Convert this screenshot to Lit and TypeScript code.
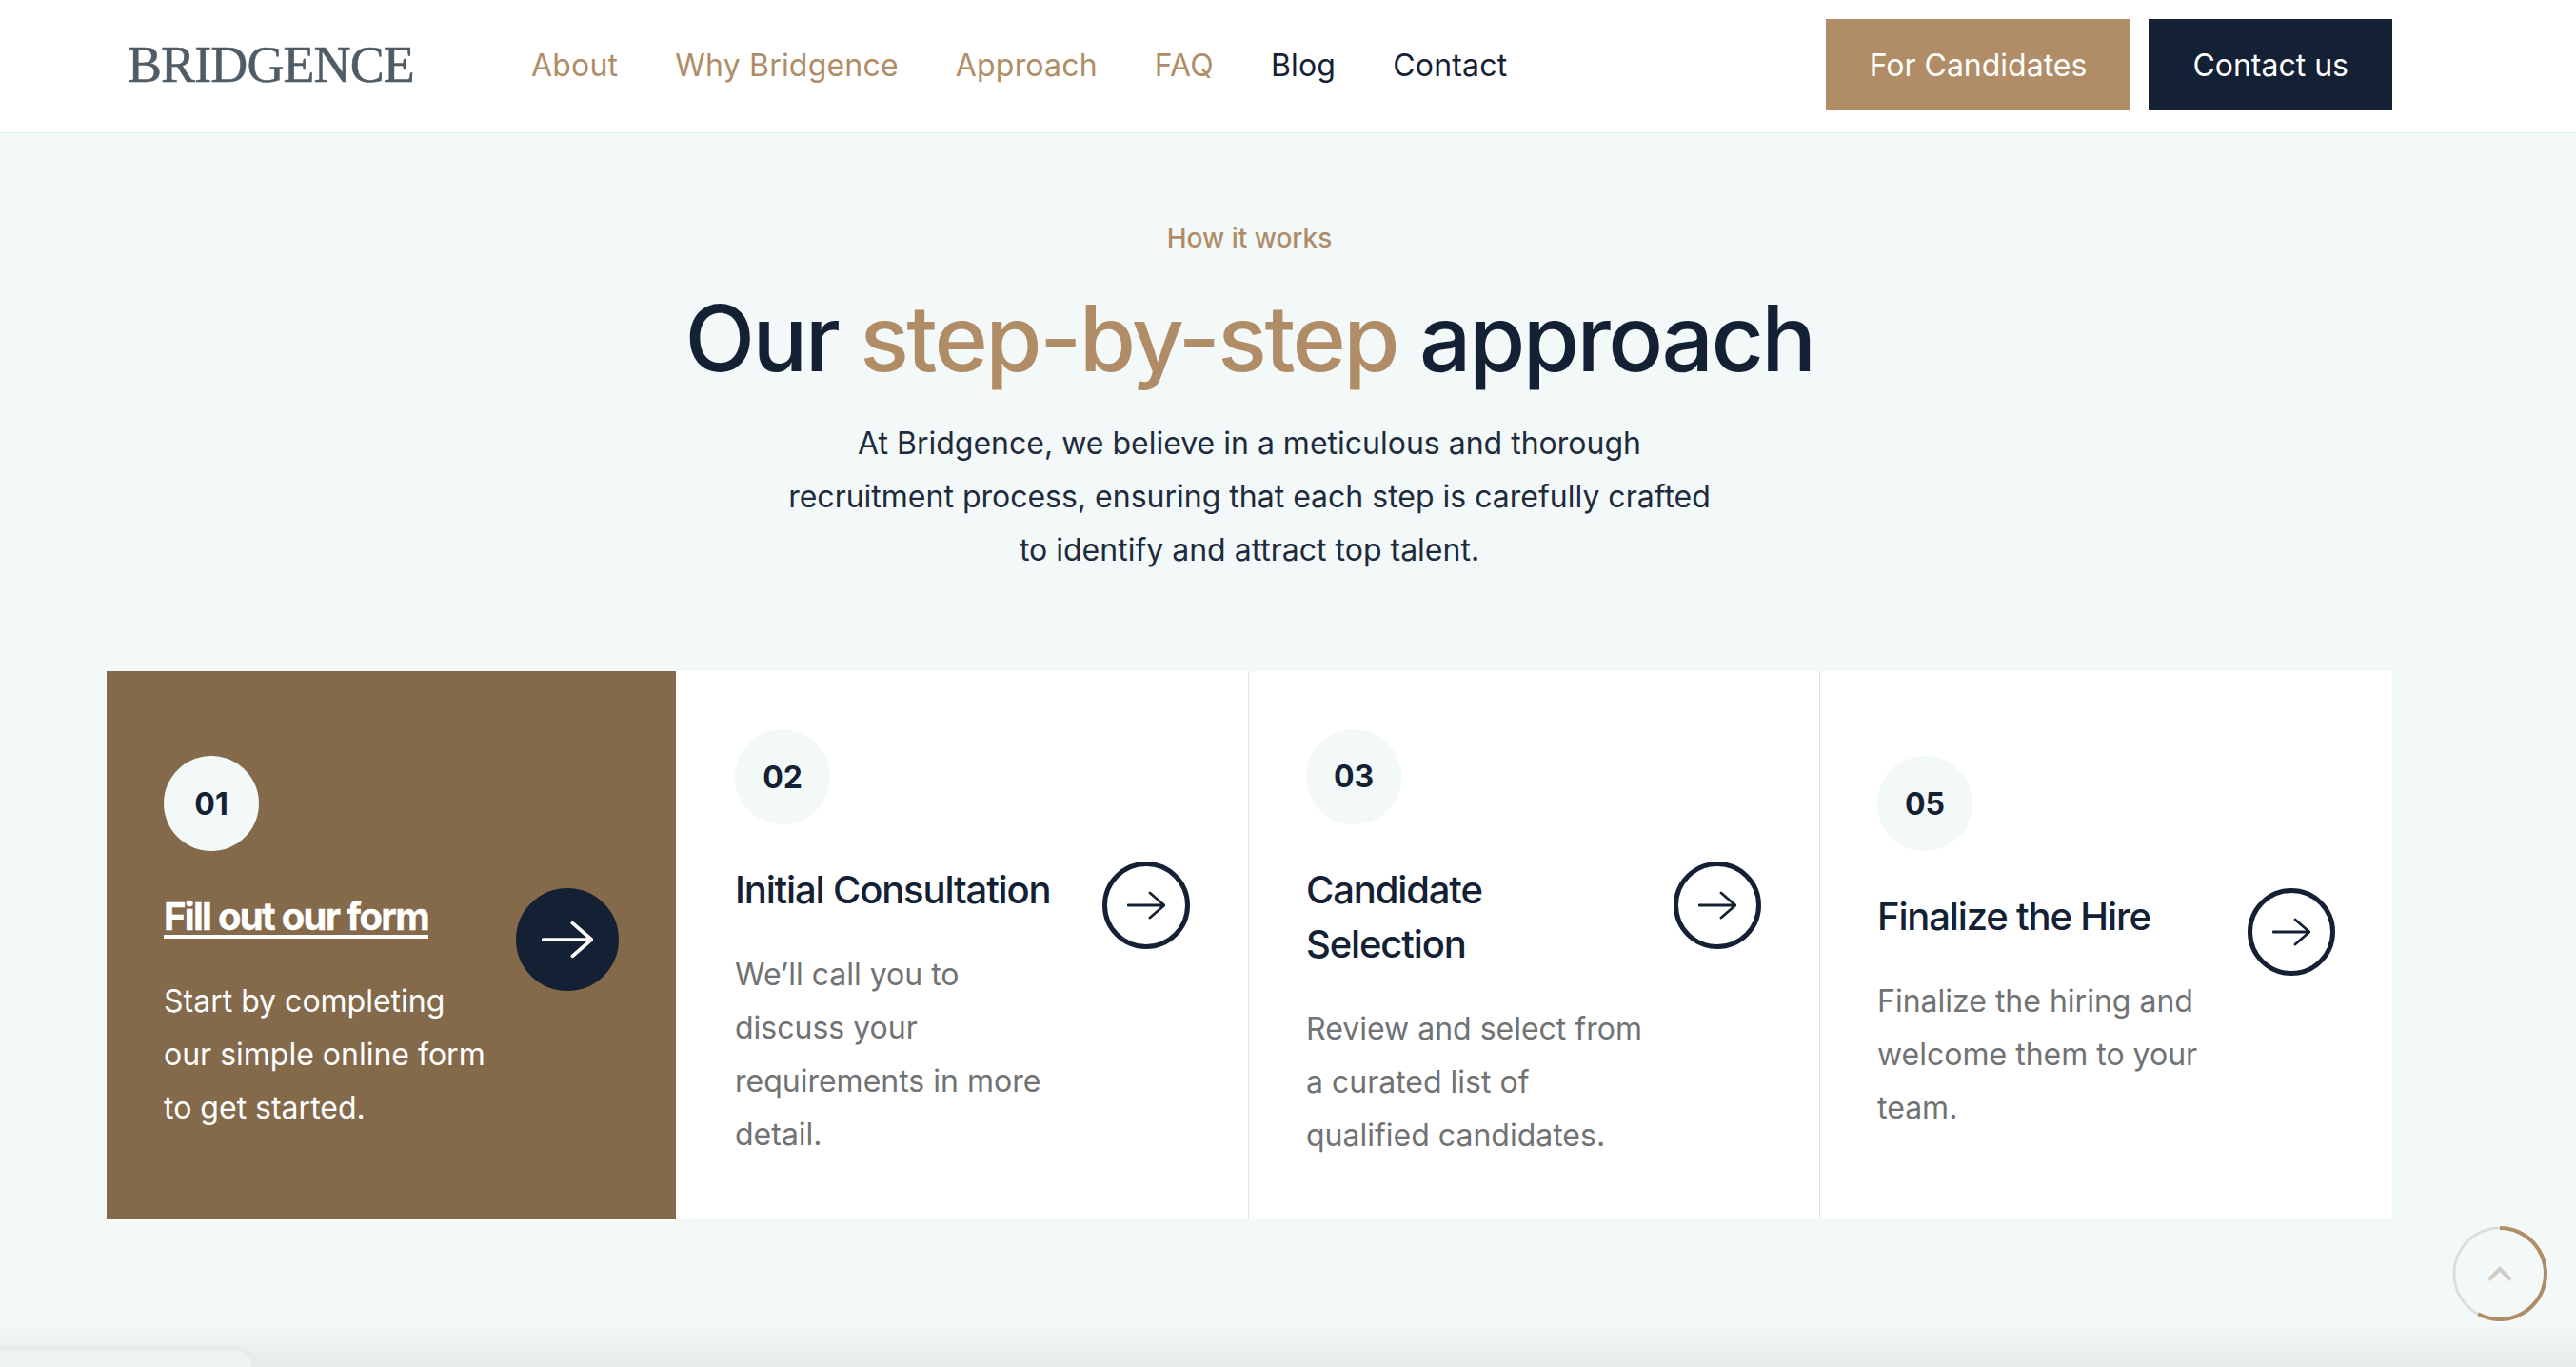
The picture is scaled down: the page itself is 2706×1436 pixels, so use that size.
import { LitElement, html, css, svg } from "lit";
import { customElement } from "lit/decorators.js";

const steps = [
  { n: "01", title: ["Fill out our form"], text: ["Start by completing", "our simple online form", "to get started."], active: true },
  { n: "02", title: ["Initial Consultation"], text: ["We’ll call you to", "discuss your", "requirements in more", "detail."] },
  { n: "03", title: ["Candidate", "Selection"], text: ["Review and select from", "a curated list of", "qualified candidates."] },
  { n: "05", title: ["Finalize the Hire"], text: ["Finalize the hiring and", "welcome them to your", "team."] },
];

const lines = (a: string[]) => a.map((l, i) => html`${i ? html`<br />` : ""}${l}`);

@customElement("app-root")
export class AppRoot extends LitElement {
  static styles = css`
    :host {
      display: block;
      position: relative;
      height: 1436px;
      overflow: hidden;
      background: #f3f8f8;
      font-family: Inter, "Liberation Sans", sans-serif;
      color: #142034;
    }
    .nav {
      display: flex;
      align-items: center;
      height: 136px;
      padding: 0 193px 3px 134px;
      background: #fff;
      border-bottom: 1px solid #e3e6e7;
    }
    .logo {
      font-family: "Liberation Serif", serif;
      font-size: 54px;
      letter-spacing: -0.9px;
      color: #4f5c66;
      -webkit-text-stroke: 0.5px #4f5c66;
      width: 301px;
      margin-right: 123px;
      white-space: nowrap;
    }
    .links {
      display: flex;
      gap: 60px;
      font-size: 32px;
      letter-spacing: 0.2px;
    }
    .links a { color: #142034; }
    .links a.tan { color: #b08d66; }
    .btns {
      margin-left: auto;
      display: flex;
      gap: 19px;
    }
    .btn {
      height: 96px;
      padding: 0 46px;
      display: flex;
      align-items: center;
      font-size: 32px;
      color: #fff;
      background: #142034;
    }
    .btn.tan { background: #b08d66; }
    .main {
      padding: 90px 193px 0 112px;
      text-align: center;
    }
    .eyebrow {
      font-size: 28px;
      line-height: 40px;
      font-weight: 500;
      color: #b08d66;
    }
    h1 {
      margin: 25px 0 0;
      font-size: 96px;
      line-height: 120px;
      font-weight: 500;
      letter-spacing: -2.6px;
    }
    h1 span { color: #b08d66; }
    .lead {
      margin: 23px 0 0;
      font-size: 32px;
      line-height: 56px;
      color: #1d2b3c;
    }
    .cards {
      display: grid;
      grid-template-columns: 598px 602px 600px 1fr;
      margin-top: 99px;
      height: 576px;
      text-align: left;
    }
    .card {
      background: #fff;
      padding: 0 61px 0 60px;
      display: flex;
      flex-direction: column;
      justify-content: center;
      border-right: 1px solid #dfe4e4;
    }
    .card:nth-child(2) { padding-left: 62px; }
    .card:last-child { border-right: 0; padding-right: 60px; }
    .card.active {
      background: #846a4b;
      color: #fff;
      border-right: 0;
      padding-right: 60px;
    }
    .num {
      width: 100px;
      height: 100px;
      border-radius: 50%;
      background: #f3f8f8;
      color: #142034;
      display: flex;
      align-items: center;
      justify-content: center;
      font-size: 32px;
      font-weight: 700;
    }
    .row {
      display: flex;
      justify-content: space-between;
      align-items: flex-start;
      margin-top: 40px;
    }
    h3 {
      margin: 0;
      font-size: 40px;
      line-height: 57px;
      font-weight: 500;
      letter-spacing: -1.15px;
      white-space: nowrap;
    }
    .active h3 {
      font-weight: 700;
      text-decoration: underline;
      text-decoration-thickness: 4px;
      text-underline-offset: 5px;
      letter-spacing: -1.7px;
      -webkit-text-stroke: 0.4px #fff;
    }
    p {
      margin: 33px 0 0;
      font-size: 32px;
      line-height: 56px;
      color: #707274;
      white-space: nowrap;
    }
    .active p { color: #fff; }
    .go {
      flex: none;
      width: 92px;
      height: 92px;
      border: 5.5px solid #142034;
      box-sizing: border-box;
      border-radius: 50%;
      display: flex;
      align-items: center;
      justify-content: center;
      margin-top: -1px;
    }
    .go svg { width: 40px; height: 30px; stroke: #142034; }
    .active .go {
      width: 108px;
      height: 108px;
      background: #142034;
    }
    .active .go svg { width: 54px; height: 40px; stroke: #fff; }
    .shade {
      position: absolute;
      left: 0;
      right: 0;
      bottom: 0;
      height: 46px;
      background: linear-gradient(#f3f8f800, #e6eaea);
    }
    .tab {
      position: absolute;
      left: 0;
      bottom: 0;
      width: 265px;
      height: 18px;
      background: #eef2f3;
      border-top-right-radius: 24px;
      box-shadow: 0 0 8px rgba(0, 0, 0, 0.05);
    }
    .top {
      position: absolute;
      left: 2576px;
      top: 1288px;
      width: 100px;
      height: 100px;
    }
  `;

  private arrow() {
    return html`<svg viewBox="0 0 40 30" fill="none" stroke-width="2.8" stroke-linecap="round" stroke-linejoin="round">
      ${svg`<path d="M1 15H39M24 2L39 15L24 28" />`}
    </svg>`;
  }

  render() {
    return html`
      <header class="nav">
        <div class="logo">BRIDGENCE</div>
        <nav class="links">
          <a class="tan">About</a><a class="tan">Why Bridgence</a><a class="tan">Approach</a><a class="tan">FAQ</a><a>Blog</a><a>Contact</a>
        </nav>
        <div class="btns">
          <div class="btn tan">For Candidates</div>
          <div class="btn">Contact us</div>
        </div>
      </header>
      <main class="main">
        <div class="eyebrow">How it works</div>
        <h1>Our <span>step-by-step</span> approach</h1>
        <div class="lead">
          At Bridgence, we believe in a meticulous and thorough<br />
          recruitment process, ensuring that each step is carefully crafted<br />
          to identify and attract top talent.
        </div>
        <section class="cards">
          ${steps.map(
            (s) => html`<article class="card ${s.active ? "active" : ""}">
              <div class="num">${s.n}</div>
              <div class="row">
                <div>
                  <h3>${lines(s.title)}</h3>
                  <p>${lines(s.text)}</p>
                </div>
                <div class="go">${this.arrow()}</div>
              </div>
            </article>`
          )}
        </section>
      </main>
      <div class="shade"></div>
      <div class="tab"></div>
      <svg class="top" viewBox="0 0 100 100" fill="none">
        <circle cx="50" cy="50" r="48" stroke="#dcdfdf" stroke-width="3" />
        <path d="M50 2A48 48 0 1 1 27.3 92.3" stroke="#b08d66" stroke-width="4" />
        <path d="M38.5 56.5L50 45L61.5 56.5" stroke="#d0ccc6" stroke-width="4" />
      </svg>
    `;
  }
}
